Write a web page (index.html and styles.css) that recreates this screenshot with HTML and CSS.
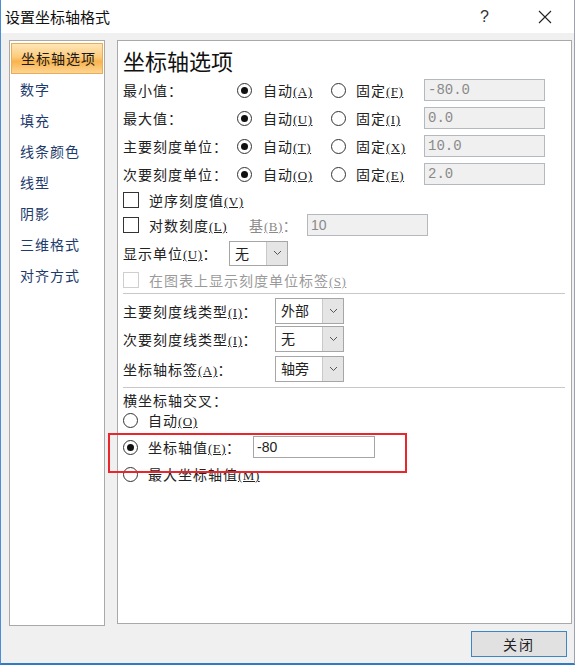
FILE: index.html
```html
<!DOCTYPE html>
<html>
<head>
	<title>设置坐标轴格式</title>
	<meta charset="UTF-8">
	<link rel="stylesheet" href="styles.css">
</head>
<body>
	<div class="window">
		<div class="titlebar">
			<span class="title">设置坐标轴格式</span>
			<span class="help">?</span>
			<svg class="close-x" width="14" height="14" viewBox="0 0 14 14"><path d="M1 1 L13 13 M13 1 L1 13" stroke="#222" stroke-width="1.1" fill="none"/></svg>
		</div>

		<div class="main">
			<div class="nav">
				<div class="nav-item selected">坐标轴选项</div>
				<div class="nav-item">数字</div>
				<div class="nav-item">填充</div>
				<div class="nav-item">线条颜色</div>
				<div class="nav-item">线型</div>
				<div class="nav-item">阴影</div>
				<div class="nav-item">三维格式</div>
				<div class="nav-item">对齐方式</div>
			</div>

			<div class="panel">
				<h2 class="heading">坐标轴选项</h2>

				<div class="row">
					<span class="label">最小值：</span>
					<span class="radio checked"></span><span class="opt-a">自动<u class="key">(A)</u></span>
					<span class="radio"></span><span class="opt-b">固定<u class="key">(F)</u></span>
					<span class="field disabled">-80.0</span>
				</div>
				<div class="row">
					<span class="label">最大值：</span>
					<span class="radio checked"></span><span class="opt-a">自动<u class="key">(U)</u></span>
					<span class="radio"></span><span class="opt-b">固定<u class="key">(I)</u></span>
					<span class="field disabled">0.0</span>
				</div>
				<div class="row">
					<span class="label">主要刻度单位：</span>
					<span class="radio checked"></span><span class="opt-a">自动<u class="key">(T)</u></span>
					<span class="radio"></span><span class="opt-b">固定<u class="key">(X)</u></span>
					<span class="field disabled">10.0</span>
				</div>
				<div class="row">
					<span class="label">次要刻度单位：</span>
					<span class="radio checked"></span><span class="opt-a">自动<u class="key">(O)</u></span>
					<span class="radio"></span><span class="opt-b">固定<u class="key">(E)</u></span>
					<span class="field disabled">2.0</span>
				</div>

				<div class="row check-row">
					<span class="checkbox"></span><span>逆序刻度值<u class="key">(V)</u></span>
				</div>
				<div class="row check-row r-log">
					<span class="checkbox"></span><span class="log-text">对数刻度<u class="key">(L)</u></span>
					<span class="base-label">基<u class="key">(B)</u>：</span>
					<span class="field disabled base-field">10</span>
				</div>
				<div class="row r-unit">
					<span class="unit-label">显示单位<u class="key">(U)</u>：</span>
					<span class="select unit-select"><span class="sel-text">无</span><span class="sel-btn"><svg width="9" height="6" viewBox="0 0 9 6"><path d="M1 1 L4.5 4.5 L8 1" stroke="#555" fill="none"/></svg></span></span>
				</div>
				<div class="row check-row disabled-text">
					<span class="checkbox off"></span><span>在图表上显示刻度单位标签<u class="key">(S)</u></span>
				</div>

				<div class="sep"></div>

				<div class="row sel-row">
					<span class="sel-label">主要刻度线类型<u class="key">(I)</u>：</span>
					<span class="select"><span class="sel-text">外部</span><span class="sel-btn"><svg width="9" height="6" viewBox="0 0 9 6"><path d="M1 1 L4.5 4.5 L8 1" stroke="#555" fill="none"/></svg></span></span>
				</div>
				<div class="row sel-row">
					<span class="sel-label">次要刻度线类型<u class="key">(I)</u>：</span>
					<span class="select"><span class="sel-text">无</span><span class="sel-btn"><svg width="9" height="6" viewBox="0 0 9 6"><path d="M1 1 L4.5 4.5 L8 1" stroke="#555" fill="none"/></svg></span></span>
				</div>
				<div class="row sel-row last">
					<span class="sel-label">坐标轴标签<u class="key">(A)</u>：</span>
					<span class="select"><span class="sel-text">轴旁</span><span class="sel-btn"><svg width="9" height="6" viewBox="0 0 9 6"><path d="M1 1 L4.5 4.5 L8 1" stroke="#555" fill="none"/></svg></span></span>
				</div>

				<div class="sep sep2"></div>

				<div class="row r-cross">横坐标轴交叉：</div>
				<div class="row r-auto">
					<span class="radio"></span><span class="opt-c">自动<u class="key">(O)</u></span>
				</div>
				<div class="row r-value">
					<span class="radio checked"></span><span class="opt-c value-label">坐标轴值<u class="key">(E)</u>：</span>
					<span class="field value-field">-80</span>
				</div>
				<div class="row r-max">
					<span class="radio"></span><span class="opt-c">最大坐标轴值<u class="key">(M)</u></span>
				</div>

				<div class="highlight"></div>
			</div>
		</div>

		<div class="footer">
			<button class="btn">关闭</button>
		</div>
	</div>
</body>
</html>
```

FILE: styles.css
```css
body {
	margin: 0;
	background-color: #ffffff;
	font-family: "Noto Sans CJK SC", "Noto Sans", sans-serif;
	font-size: 14px;
	color: #222;
}

.window {
	width: 573px;
	height: 663px;
	border-left: 1px solid #4a8fd4;
	border-right: 1px solid #9aa3ad;
	border-bottom: 2px solid #2f7bc4;
	background-color: #f0f0f0;
	display: flex;
	flex-direction: column;
}

.titlebar {
	height: 33px;
	background-color: #ffffff;
	display: flex;
	align-items: center;
	padding-left: 4px;
}

.title {
	font-size: 15px;
	color: #111;
	flex: 1;
}

.help {
	font-family: "Liberation Sans", sans-serif;
	font-size: 16px;
	color: #333;
	margin-right: 49px;
}

.close-x {
	margin-right: 22px;
}

.main {
	display: flex;
	padding-top: 7px;
	padding-left: 8px;
	gap: 12px;
}

.nav {
	width: 94px;
	height: 582px;
	background-color: #ffffff;
	border: 1px solid #a9a9a9;
	padding-top: 2px;
}

.nav-item {
	height: 31px;
	line-height: 31px;
	padding-left: 10px;
	color: #1d3b6c;
	font-size: 14px;
	letter-spacing: 1px;
}

.nav-item.selected {
	margin: 0 1px;
	padding-left: 9px;
	height: 29px;
	line-height: 29px;
	color: #1a1a1a;
	border: 1px solid #e9ad55;
	background: linear-gradient(#fee6b8, #fccb7c 45%, #f9b34c 60%, #fdd594);
}

.panel {
	position: relative;
	width: 448px;
	height: 582px;
	background-color: #ffffff;
	border: 1px solid #a9a9a9;
	padding-left: 5px;
	letter-spacing: 1px;
}

.heading {
	margin: 0;
	height: 35px;
	line-height: 38px;
	font-size: 22px;
	font-weight: normal;
	color: #111;
	letter-spacing: 0;
}

.row {
	height: 28px;
	display: flex;
	align-items: center;
	white-space: nowrap;
}

.key {
	font-family: "Liberation Serif", serif;
	font-size: 13px;
	letter-spacing: 0.5px;
}

.label {
	width: 114px;
}

.radio {
	width: 13px;
	height: 13px;
	border: 1px solid #333;
	border-radius: 50%;
	background-color: #fff;
	display: flex;
	align-items: center;
	justify-content: center;
	flex-shrink: 0;
}

.radio.checked::after {
	content: "";
	width: 7px;
	height: 7px;
	border-radius: 50%;
	background-color: #111;
}

.opt-a {
	margin-left: 11px;
	width: 68px;
}

.opt-b {
	margin-left: 10px;
	width: 68px;
}

.opt-c {
	margin-left: 10px;
}

.field {
	height: 20px;
	line-height: 20px;
	border: 1px solid #a6a6a6;
	background-color: #fff;
	padding-left: 3px;
	font-family: "Liberation Mono", monospace;
	font-size: 14px;
	color: #333;
	letter-spacing: 0;
}

.field.disabled {
	width: 116px;
	background-color: #f0f0f0;
	border-color: #b4b9c0;
	color: #8a8a8a;
}

.checkbox {
	width: 14px;
	height: 14px;
	border: 1px solid #333;
	background-color: #fff;
	margin-right: 10px;
	flex-shrink: 0;
}

.checkbox.off {
	border-color: #cfcfcf;
}

.disabled-text {
	color: #9a9a9a;
}

.check-row {
	height: 24px;
}

.r-log {
	height: 26px;
}

.log-text {
	width: 100px;
}

.base-label {
	width: 58px;
	color: #8a8a8a;
}

.base-field {
	font-family: "Liberation Sans", sans-serif;
}

.r-unit {
	height: 30px;
}

.unit-label {
	width: 106px;
}

.select {
	height: 23px;
	border: 1px solid #a6a6a6;
	background-color: #fff;
	display: flex;
	align-items: stretch;
	width: 67px;
	letter-spacing: 0;
}

.unit-select {
	width: 57px;
}

.sel-text {
	flex: 1;
	padding-left: 5px;
	line-height: 23px;
}

.sel-btn {
	width: 20px;
	background-color: #e5e5e5;
	border-left: 1px solid #c8c8c8;
	display: flex;
	align-items: center;
	justify-content: center;
}

.sep {
	height: 1px;
	background-color: #c8c8c8;
	margin-top: 1px;
	margin-right: 6px;
	margin-bottom: 3px;
}

.sel-row .select {
	height: 24px;
}

.sel-label {
	width: 152px;
}

.sel-row.last {
	margin-top: 2px;
}

.sep2 {
	margin-top: 4px;
	margin-bottom: 1px;
}

.r-cross {
	height: 22px;
}

.r-auto {
	height: 18px;
}

.r-value {
	margin-top: 5px;
	height: 26px;
}

.value-label {
	width: 105px;
}

.value-field {
	width: 117px;
	font-family: "Liberation Sans", sans-serif;
	color: #222;
}

.r-max {
	margin-top: 2px;
	height: 24px;
}

.highlight {
	position: absolute;
	left: -10px;
	top: 392px;
	width: 295px;
	height: 36px;
	border: 2px solid #e8262b;
}

.footer {
	display: flex;
	justify-content: flex-end;
	padding-top: 5px;
	padding-right: 7px;
}

.btn {
	width: 96px;
	height: 26px;
	border: 1px solid #3d86c6;
	background-color: #e1e1e1;
	font-family: "Noto Sans CJK SC", sans-serif;
	font-size: 14px;
	color: #222;
	letter-spacing: 2px;
}
```
